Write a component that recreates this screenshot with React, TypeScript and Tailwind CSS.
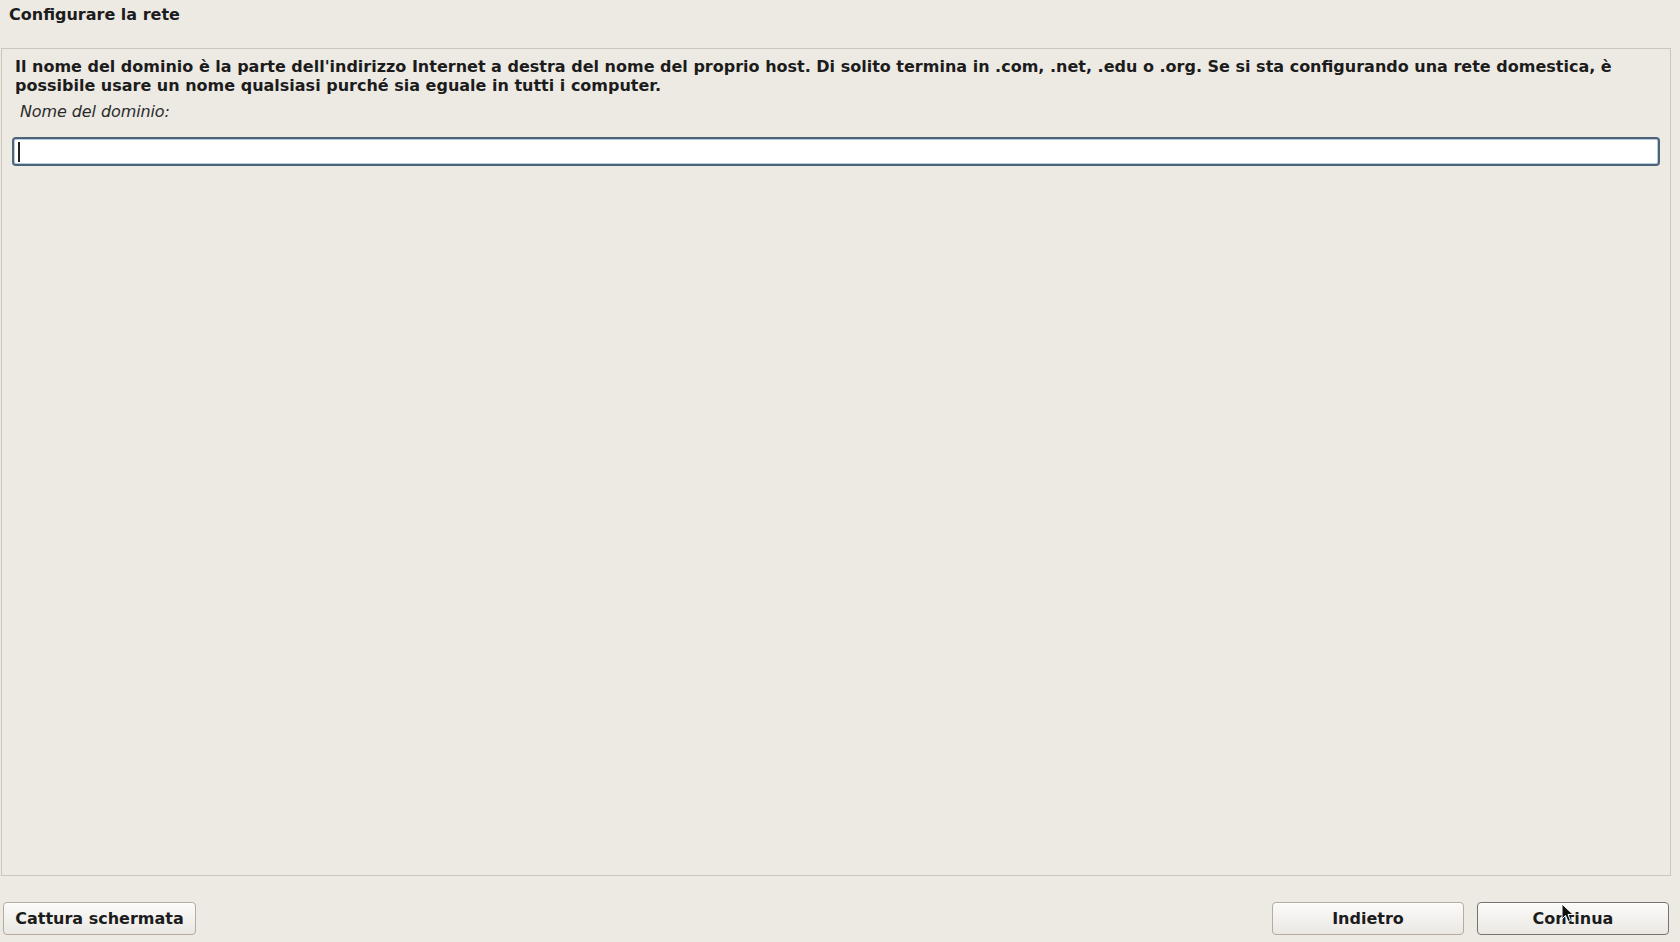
import React from "react";

const FONT = { fontFamily: '"DejaVu Sans", "Liberation Sans", sans-serif' };

const BTN =
  "h-[33px] rounded-[4px] border bg-gradient-to-b from-[#fbfbfa] to-[#ebe8e3] text-[16px] font-bold text-[#1c1c1c] shadow-[inset_0_1px_0_#ffffff]";

function Button({ label, isDefault }: { label: string; isDefault?: boolean }) {
  return (
    <button
      className={
        BTN + " w-[192px] " + (isDefault ? "border-[#77726b]" : "border-[#b5ab9f]")
      }
    >
      {label}
    </button>
  );
}

function Pointer() {
  return (
    <svg
      className="pointer-events-none absolute left-[1561px] top-[903px]"
      width="14"
      height="20"
      viewBox="0 0 14 20"
    >
      <path
        d="M1 1 L1 16 L4.5 12.5 L7 18.5 L9.5 17.5 L7 11.5 L12 11.5 Z"
        fill="#111"
        stroke="#fff"
        strokeWidth="1"
      />
    </svg>
  );
}

export default function App() {
  return (
    <div
      className="relative flex h-[942px] w-[1680px] flex-col overflow-hidden bg-[#edeae4] text-[#1c1c1c]"
      style={FONT}
    >
      <div className="h-[48px] pl-[9px] pt-[5px] text-[16px] font-bold leading-[19px]">
        Configurare la rete
      </div>

      <div className="ml-[1px] mr-[9px] flex h-[828px] flex-col border border-[#cdc6bb] px-[10px] pt-[8px]">
        <p className="pl-[3px] text-[16px] font-bold leading-[19px]">
          Il nome del dominio è la parte dell'indirizzo Internet a destra del
          nome del proprio host. Di solito termina in .com, .net, .edu o .org.
          Se si sta configurando una rete domestica, è possibile usare un nome
          qualsiasi purché sia eguale in tutti i computer.
        </p>
        <div className="mt-[7px] pl-[8px] text-[16px] italic leading-[19px] tracking-[-0.1px] text-[#2a2a2a]">
          Nome del dominio:
        </div>
        <div className="mt-[16px] flex h-[29px] items-center rounded-[4px] border-2 border-[#4d6478] bg-white pl-[4px] shadow-[inset_0_0_0_1px_#b7cbe0]">
          <div className="h-[20px] w-[2px] bg-[#222]" />
        </div>
      </div>

      <div className="flex flex-1 items-start pt-[26px] pl-[3px] pr-[11px]">
        <button className={BTN + " w-[193px] border-[#b5ab9f]"}>
          Cattura schermata
        </button>
        <div className="ml-auto flex gap-[13px]">
          <Button label="Indietro" />
          <Button label="Continua" isDefault />
        </div>
      </div>

      <Pointer />
    </div>
  );
}
